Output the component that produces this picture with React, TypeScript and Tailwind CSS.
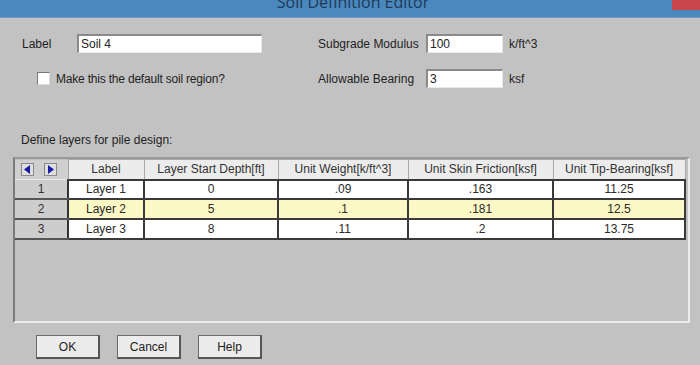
import React from "react";

const rows = [
  { n: "1", label: "Layer 1", d: "0", w: ".09", s: ".163", t: "11.25", hl: false },
  { n: "2", label: "Layer 2", d: "5", w: ".1", s: ".181", t: "12.5", hl: true },
  { n: "3", label: "Layer 3", d: "8", w: ".11", s: ".2", t: "13.75", hl: false },
];

function Input({ value, w }: { value: string; w: string }) {
  return (
    <div
      className={`${w} h-[19px] bg-white border-t-2 border-l-2 border-t-[#8a8a8a] border-l-[#8a8a8a] border-b border-r border-b-[#e8e8e8] border-r-[#e8e8e8] flex items-center pl-[2px] text-[12px] text-[#222] leading-none`}
    >
      {value}
    </div>
  );
}

function Btn({ label }: { label: string }) {
  return (
    <div className="w-[64px] h-[24px] bg-[#ececec] border border-[#6a6a6a] border-b-2 border-r-2 border-b-[#555] border-r-[#555] flex items-center justify-center text-[12px] text-[#222]">
      {label}
    </div>
  );
}

export default function App() {
  return (
    <div
      className="w-[700px] h-[365px] bg-[#c2c2c2] overflow-hidden flex flex-col"
      style={{ fontFamily: '"Liberation Sans", Arial, sans-serif' }}
    >
      {/* Title bar */}
      <div className="h-[18px] bg-[#4a88bd] relative overflow-hidden flex justify-center shrink-0 border-b border-[#6f9cc4]">
        <div className="mt-[-8px] text-[16px] text-[#1e3a57] leading-[20px] pl-[6px]" style={{ fontFamily: '"Open Sans", "Noto Sans", sans-serif' }}>
          Soil Definition Editor
        </div>
        <div className="absolute right-0 top-0 w-[28px] h-[10px] bg-[#c9474a]" />
      </div>

      {/* Top form */}
      <div className="flex pt-[16px]">
        <div className="w-[318px] flex flex-col">
          <div className="flex items-center h-[19px] pl-[22px]">
            <span className="w-[55px] text-[12px] text-[#222]">Label</span>
            <Input value="Soil 4" w="w-[185px]" />
          </div>
          <div className="flex items-center h-[19px] mt-[16px] pl-[37px]">
            <div className="w-[13px] h-[13px] bg-white border border-[#777] border-b-[#ddd] border-r-[#ddd]" />
            <span className="ml-[6px] text-[12px] text-[#222] tracking-[-0.2px]">Make this the default soil region?</span>
          </div>
        </div>
        <div className="flex flex-col">
          <div className="flex items-center h-[19px]">
            <span className="w-[108px] text-[12px] text-[#222]">Subgrade Modulus</span>
            <Input value="100" w="w-[77px]" />
            <span className="ml-[6px] text-[12px] text-[#222]">k/ft^3</span>
          </div>
          <div className="flex items-center h-[19px] mt-[16px]">
            <span className="w-[108px] text-[12px] text-[#222]">Allowable Bearing</span>
            <Input value="3" w="w-[77px]" />
            <span className="ml-[6px] text-[12px] text-[#222]">ksf</span>
          </div>
        </div>
      </div>

      <div className="pl-[21px] mt-[45px] text-[12px] text-[#222] leading-[14px]">Define layers for pile design:</div>

      {/* Grid */}
      <div className="ml-[13px] mt-[10px] w-[677px] h-[166px] border-l-2 border-t-2 border-l-[#7a7a7a] border-t-[#9a9a9a] border-r-2 border-b-2 border-r-[#ececec] border-b-[#ececec]">
        <table className="border-collapse text-[12px] text-[#2a2a2a] table-fixed">
          <colgroup>
            <col className="w-[53px]" />
            <col className="w-[76px]" />
            <col className="w-[134px]" />
            <col className="w-[130px]" />
            <col className="w-[145px]" />
            <col className="w-[132px]" />
          </colgroup>
          <thead>
            <tr className="h-[20px]">
              <th className="bg-[#cfcfcf] border-r border-[#a0a0a0] p-0 font-normal">
                <div className="flex items-center gap-[10px] pl-[6px]">
                  <div className="w-[13px] h-[13px] bg-[#dedede] border border-[#8a8a8a] flex items-center justify-center">
                    <svg width="7" height="9" viewBox="0 0 7 9"><polygon points="6,0 6,9 0,4.5" fill="#1a1aa8" /></svg>
                  </div>
                  <div className="w-[13px] h-[13px] bg-[#dedede] border border-[#8a8a8a] flex items-center justify-center">
                    <svg width="7" height="9" viewBox="0 0 7 9"><polygon points="1,0 1,9 7,4.5" fill="#1a1aa8" /></svg>
                  </div>
                </div>
              </th>
              {["Label", "Layer Start Depth[ft]", "Unit Weight[k/ft^3]", "Unit Skin Friction[ksf]", "Unit Tip-Bearing[ksf]"].map((h) => (
                <th key={h} className="bg-[#ececec] border border-[#a8a8a8] border-b-2 border-b-[#3a3a3a] p-0 font-normal text-center whitespace-nowrap text-[#333]">
                  {h}
                </th>
              ))}
            </tr>
          </thead>
          <tbody>
            {rows.map((r) => (
              <tr key={r.n} className="h-[19px]">
                <td className="bg-[#cdcdcd] border-b-2 border-b-[#555] border-t border-t-[#ececec] border-r-2 border-r-[#333] p-0 text-center text-[#333]">{r.n}</td>
                {[r.label, r.d, r.w, r.s, r.t].map((v, i) => (
                  <td
                    key={i}
                    className={`${r.hl ? "bg-[#fbf8c6]" : "bg-white"} border-r-2 border-r-[#3a3a3a] border-b-2 border-b-[#3a3a3a] p-0 text-center leading-[16px]`}
                  >
                    {v}
                  </td>
                ))}
              </tr>
            ))}
          </tbody>
        </table>
      </div>

      {/* Buttons */}
      <div className="flex gap-[17px] pl-[36px] mt-[12px]">
        <Btn label="OK" />
        <Btn label="Cancel" />
        <Btn label="Help" />
      </div>
    </div>
  );
}
